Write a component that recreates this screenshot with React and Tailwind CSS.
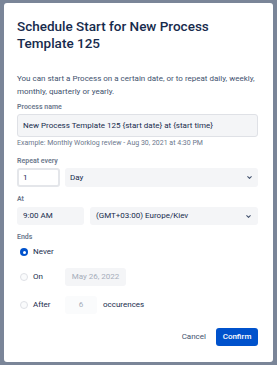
import { ChevronDown } from 'lucide-react';

function Label({ children, className = '' }) {
  return (
    <div className={`h-[10px] leading-[10px] text-[7px] font-semibold text-[#6b778c] ${className}`}>{children}</div>
  );
}

function Radio({ checked, label }) {
  return (
    <div className="flex items-center">
      {checked ? (
        <span className="w-[8px] h-[8px] rounded-full bg-[#0052cc] flex items-center justify-center">
          <span className="w-[3px] h-[3px] rounded-full bg-white" />
        </span>
      ) : (
        <span className="w-[8px] h-[8px] rounded-full border border-[#dfe1e6] bg-[#fafbfc]" />
      )}
      <span className="ml-[5px] text-[8px] text-[#172b4d]">{label}</span>
    </div>
  );
}

export default function App() {
  return (
    <div
      className="w-[277px] h-[365px] bg-[#7a8598] pt-[3px] pl-[4px] overflow-hidden"
      style={{ fontFamily: 'Roboto, "Liberation Sans", sans-serif' }}
    >
      <div className="w-[269px] h-[359px] bg-white rounded-[3px] pl-[13px] pr-[15px] pt-[15px]">
        <h1 className="text-[13.5px] leading-[17px] font-medium text-[#172b4d]">
          Schedule Start for New Process Template 125
        </h1>

        <p className="mt-[20px] text-[8px] leading-[13px] text-[#42526e]">
          You can start a Process on a certain date, or to repeat daily, weekly, monthly, quarterly or yearly.
        </p>

        <Label className="mt-[4px]">Process name</Label>
        <div className="mt-[2px] h-[23px] border border-[#dfe1e6] bg-[#f4f5f7] rounded-[3px] flex items-center px-[5px] text-[8px] text-[#172b4d]">
          New Process Template 125 {'{start date}'} at {'{start time}'}
        </div>
        <div className="mt-[1px] h-[10px] leading-[10px] text-[7px] text-[#6b778c]">
          Example: Monthly Worklog review - Aug 30, 2021 at 4:30 PM
        </div>

        <Label className="mt-[8px]">Repeat every</Label>
        <div className="mt-[2px] flex gap-[5px]">
          <div className="w-[43px] h-[19px] border-2 border-[#e4e6ea] bg-white rounded-[3px] flex items-center px-[4px] text-[8px] text-[#172b4d]">
            1
          </div>
          <div className="flex-1 h-[19px] bg-[#f4f5f7] rounded-[3px] flex items-center justify-between px-[5px] text-[8px] text-[#172b4d]">
            <span>Day</span>
            <ChevronDown className="w-[7px] h-[7px] text-[#42526e]" strokeWidth={3.5} />
          </div>
        </div>

        <Label className="mt-[7px]">At</Label>
        <div className="mt-[3px] flex gap-[6px]">
          <div className="w-[67px] h-[18px] bg-[#f4f5f7] rounded-[3px] flex items-center px-[6px] text-[8px] text-[#172b4d]">
            9:00 AM
          </div>
          <div className="flex-1 h-[18px] bg-[#f4f5f7] rounded-[3px] flex items-center justify-between px-[6px] text-[8px] text-[#172b4d]">
            <span>(GMT+03:00) Europe/Kiev</span>
            <ChevronDown className="w-[7px] h-[7px] text-[#42526e]" strokeWidth={3.5} />
          </div>
        </div>

        <Label className="mt-[7px]">Ends</Label>
        <div className="mt-[4px] h-[12px] flex items-center pl-[3px]">
          <Radio checked label="Never" />
        </div>
        <div className="mt-[10px] flex items-center">
          <div className="w-[48px] pl-[3px]">
            <Radio label="On" />
          </div>
          <div className="w-[61px] h-[18px] bg-[#f4f5f7] rounded-[3px] flex items-center justify-center text-[8px] text-[#a5adba]">
            May 26, 2022
          </div>
        </div>
        <div className="mt-[10px] flex items-center">
          <div className="w-[48px] pl-[3px]">
            <Radio label="After" />
          </div>
          <div className="w-[32px] h-[18px] bg-[#fafbfc] rounded-[3px] flex items-center justify-center text-[8px] text-[#a5adba]">
            6
          </div>
          <span className="ml-[6px] text-[8px] text-[#172b4d]">occurences</span>
        </div>

        <div className="mt-[14px] flex justify-end items-center">
          <span className="text-[8px] text-[#42526e] mr-[10px]">Cancel</span>
          <div className="w-[42px] h-[18px] bg-[#0052cc] rounded-[3px] flex items-center justify-center text-[8px] font-medium text-white">
            Confirm
          </div>
        </div>
      </div>
    </div>
  );
}
